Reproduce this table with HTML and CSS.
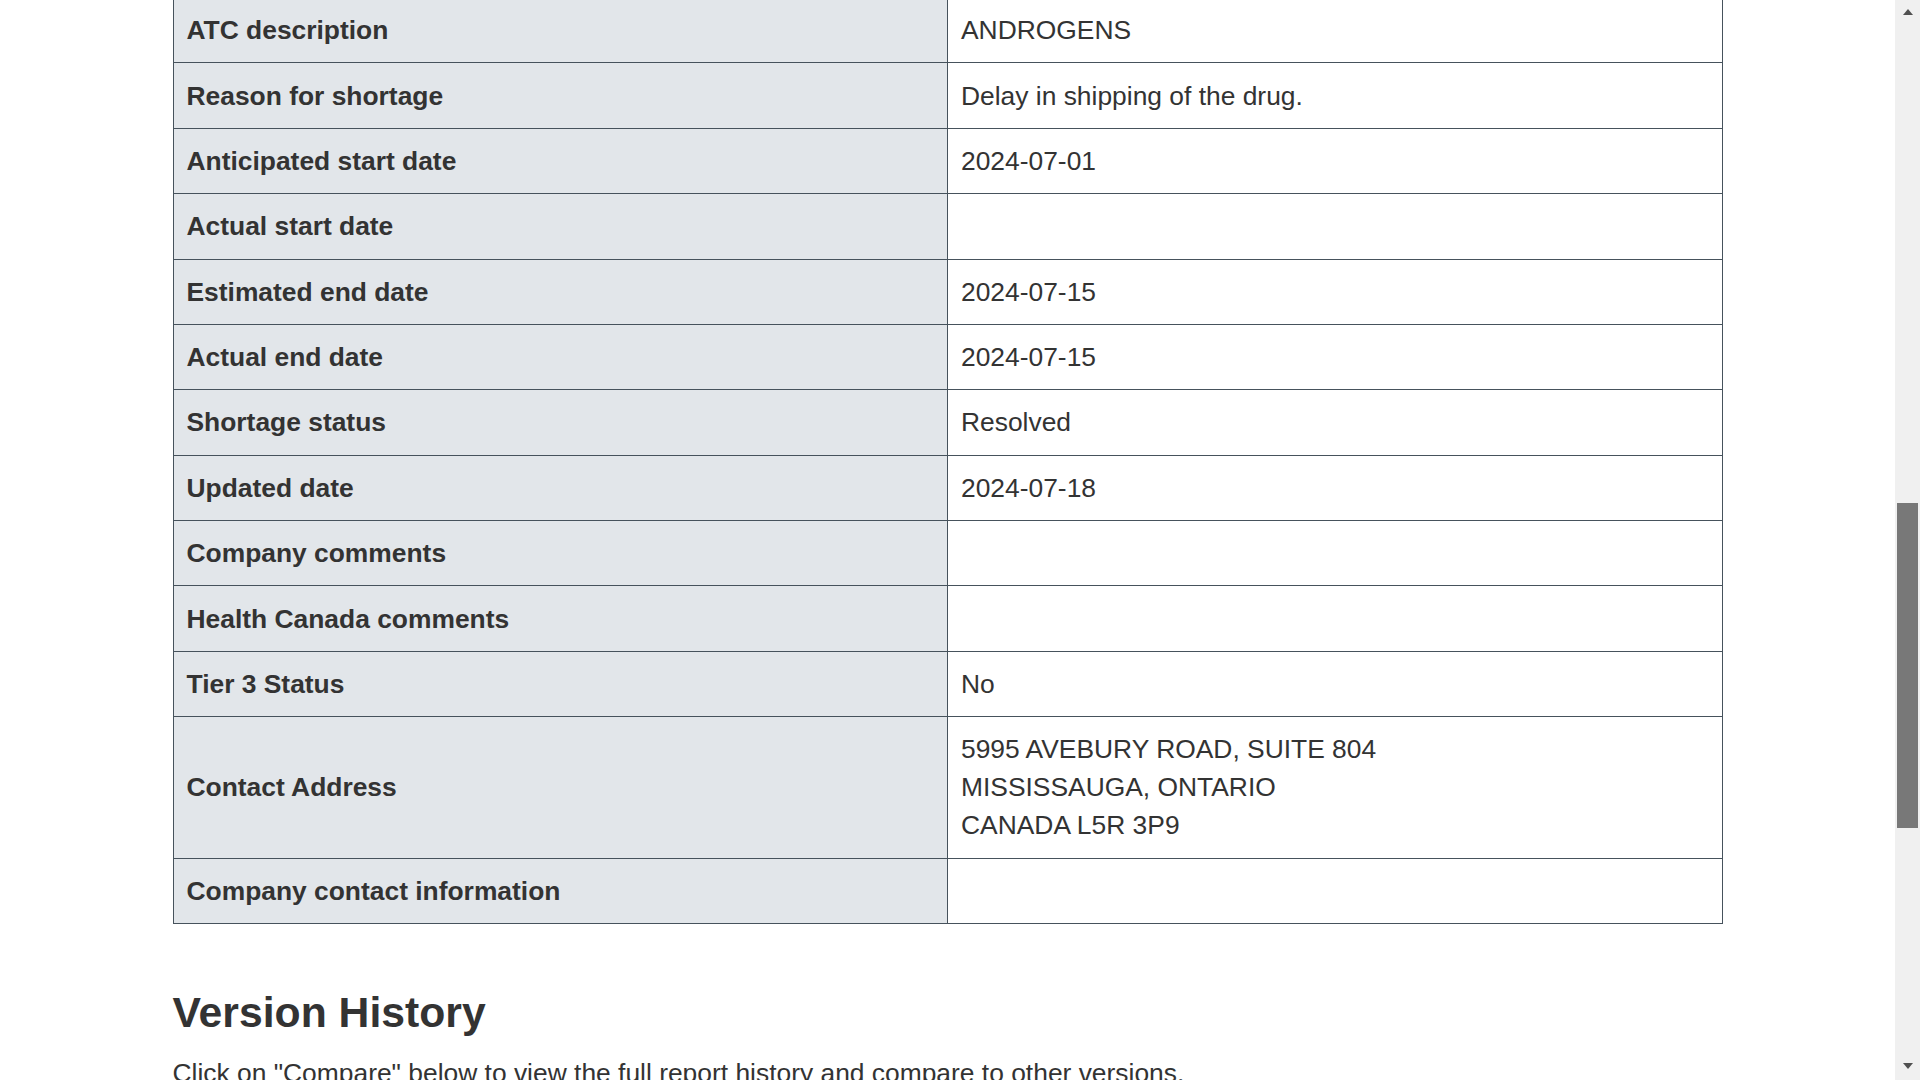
FILE: index.html
```html
<!DOCTYPE html>
<html lang="en">
<head>
  <meta charset="UTF-8" />
  <meta name="viewport" content="width=device-width, initial-scale=1" />
  <title>Drug shortage report</title>
  <link rel="stylesheet" href="styles.css">
</head>
<body>
  <div class="viewport">
    <main class="page">
      <div class="container">

        <table class="report" aria-label="Shortage report details">
          <tbody>
            <tr><th>ATC description</th><td>ANDROGENS</td></tr>
            <tr><th>Reason for shortage</th><td>Delay in shipping of the drug.</td></tr>
            <tr><th>Anticipated start date</th><td>2024-07-01</td></tr>
            <tr><th>Actual start date</th><td></td></tr>
            <tr><th>Estimated end date</th><td>2024-07-15</td></tr>
            <tr><th>Actual end date</th><td>2024-07-15</td></tr>
            <tr><th>Shortage status</th><td>Resolved</td></tr>
            <tr><th>Updated date</th><td>2024-07-18</td></tr>
            <tr><th>Company comments</th><td></td></tr>
            <tr><th>Health Canada comments</th><td></td></tr>
            <tr><th>Tier 3 Status</th><td>No</td></tr>
            <tr>
              <th>Contact Address</th>
              <td>5995 AVEBURY ROAD, SUITE 804<br>MISSISSAUGA, ONTARIO<br>CANADA L5R 3P9</td>
            </tr>
            <tr><th>Company contact information</th><td></td></tr>
          </tbody>
        </table>

        <h2>Version History</h2>
        <p>Click on "Compare" below to view the full report history and compare to other versions.</p>

      </div>
    </main>

    <!-- полоса прокрутки окна -->
    <div class="scrollbar" aria-hidden="true">
      <div class="sb-btn"><span class="arrow-up"></span></div>
      <div class="sb-track"><div class="sb-thumb"></div></div>
      <div class="sb-btn"><span class="arrow-down"></span></div>
    </div>
  </div>
</body>
</html>
```

FILE: styles.css
```css
html, body {
  margin: 0;
  height: 100%;
}

body {
  font-family: "Liberation Sans", Arial, sans-serif;
  font-size: 26.4px;
  line-height: 38px;
  color: #333;
  background: #fff;
  overflow: hidden;
}

.viewport {
  display: flex;
  height: 100vh;
  overflow: hidden;
}

.page {
  flex: 1;
  overflow: hidden;
}

.container {
  width: 1550px;
  margin: 0 auto;
}

table.report {
  width: 100%;
  border-collapse: collapse;
  table-layout: fixed;
  margin-top: -3px; /* страница прокручена */
}

.report th, .report td {
  border: 1px solid #46525c;
  padding: 13.2px 13px;
  text-align: left;
  vertical-align: middle;
  font-size: 26.4px;
  line-height: 38px;
}

.report th {
  background: #e2e6ea;
  font-weight: bold;
}

.report td {
  background: #fff;
}

h2 {
  font-size: 42.7px;
  line-height: 46px;
  font-weight: bold;
  margin: 65px 0 19px;
  color: #333;
}

p {
  margin: 0;
}

/* полоса прокрутки */
.scrollbar {
  width: 25px;
  display: flex;
  flex-direction: column;
  background: #f0f0f0;
}

.sb-btn {
  height: 25px;
  display: flex;
  align-items: center;
  justify-content: center;
}

.arrow-up {
  width: 0;
  height: 0;
  border-left: 5.5px solid transparent;
  border-right: 5.5px solid transparent;
  border-bottom: 6px solid #505050;
  margin-top: -1px;
}

.arrow-down {
  width: 0;
  height: 0;
  border-left: 5.5px solid transparent;
  border-right: 5.5px solid transparent;
  border-top: 6px solid #505050;
  margin-top: -3px;
}

.sb-track {
  flex: 1;
  padding: 0 2px;
}

.sb-thumb {
  margin-top: 478px;
  height: 325px;
  background: #787878;
}
```
